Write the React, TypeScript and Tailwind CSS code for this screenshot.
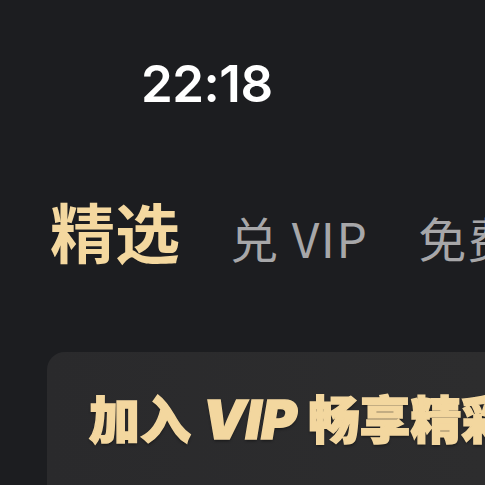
const cjk = "font-['Noto_Sans_CJK_SC',sans-serif]";

function StatusBar() {
  return (
    <div className="h-[150px] pt-[58px] pl-[141px]">
      <span className="font-['Inter',sans-serif] text-[51px] leading-none font-semibold tracking-[-0.5px] text-white">
        22:18
      </span>
    </div>
  );
}

function Tabs() {
  const tabs = ["兑 VIP", "免费看"];
  return (
    <nav className={`${cjk} flex items-baseline gap-[50px] pl-[50px] h-[202px] pt-[15px] whitespace-nowrap`}>
      <span className="text-[65px] leading-[130px] font-bold text-[#f4d89f]">精选</span>
      {tabs.map((t) => (
        <span key={t} className="text-[48px] font-normal tracking-[1.5px] text-[#a7a7a9]">
          {t}
        </span>
      ))}
    </nav>
  );
}

function VipCard() {
  return (
    <section className="ml-[47px] rounded-tl-[18px] bg-gradient-to-r from-[#2a2a2c] to-[#2d2d2e] pl-[42px] pt-[40px] h-[200px]">
      <h2
        className={`${cjk} whitespace-nowrap text-[51px] leading-none font-black text-[#f3d79f] [-webkit-text-stroke:1.5px_#f3d79f] [text-shadow:0_2px_3px_rgba(0,0,0,0.45)]`}
      >
        加入 <i className="font-['Inter',sans-serif] font-black text-[54px]">VIP</i> 畅享精彩权益
      </h2>
    </section>
  );
}

export default function App() {
  return (
    <div className="w-[485px] h-[485px] overflow-hidden bg-[#1c1d20]">
      <StatusBar />
      <Tabs />
      <VipCard />
    </div>
  );
}
